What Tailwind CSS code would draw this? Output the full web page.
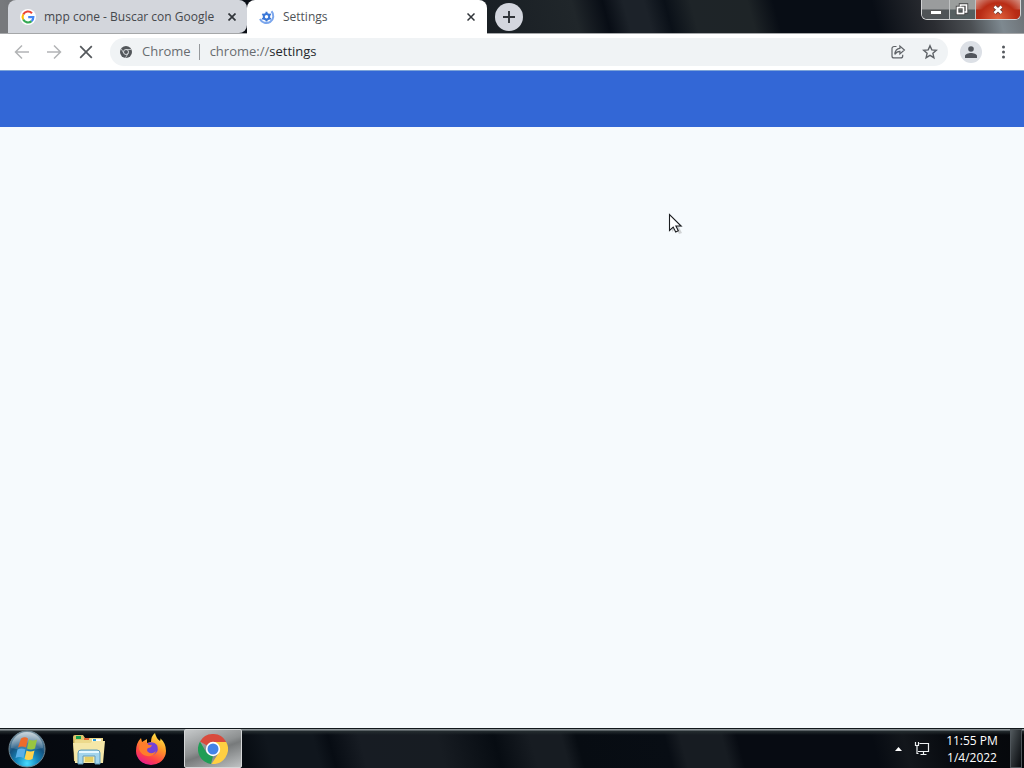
<!DOCTYPE html>
<html lang="en">
<head>
<meta charset="utf-8">
<title>Settings</title>
<script src="https://cdn.jsdelivr.net/npm/@tailwindcss/browser@4"></script>
</head>
<body class="flex h-screen flex-col overflow-hidden bg-[#f6fafd] font-['Open_Sans','Noto_Sans',sans-serif]">

<header class="flex h-[34px] shrink-0 items-start justify-between border-b border-[#a5a7a9] bg-[linear-gradient(75deg,#77797c_0,#77797c_10px,#090d14_240px,#1b2126_500px,#20262a_560px,#080d15_590px,#1c2229_610px,#1c2229_630px,#0a1018_650px,#1e2428_675px,#1e2427_730px,#080d15_755px,#080d15_850px,#2b2d32_905px,#4b4f53_940px,#7e8990_970px,#626366_1010px,#777_100%)]">
  <nav class="flex h-full items-start" aria-label="Tabs">
    <div class="ml-2 flex h-[33px] w-[239px] items-center rounded-t-lg rounded-br-lg bg-[#d3d6dc] pr-[7px] pl-3">
      <svg class="size-4 shrink-0" viewBox="0 0 16 16"><circle cx="8" cy="8" r="8" fill="#fff"/><g fill="none" stroke-width="2.1"><path d="M12 4.2A5.4 5.4 0 0 0 3.2 5.5" stroke="#ea4335"/><path d="M3.2 5.5a5.4 5.4 0 0 0 0 5" stroke="#fbbc05"/><path d="M3.2 10.5a5.4 5.4 0 0 0 8.4 1.6" stroke="#34a853"/><path d="M11.6 12.1A5.2 5.2 0 0 0 13.4 8.1H8.2" stroke="#4285f4"/></g></svg>
      <a href="#" class="ml-2 grow text-xs whitespace-nowrap text-[#45484c]">mpp cone - Buscar con Google</a>
      <button aria-label="Close tab" class="grid size-4 shrink-0 place-items-center"><svg class="size-2" viewBox="0 0 8 8"><path d="M.5.5l7 7m0-7l-7 7" stroke="#303439" stroke-width="1.7"/></svg></button>
    </div>
    <div class="flex h-[34px] w-60 items-center rounded-t-lg bg-white pr-2 pl-3">
      <svg class="size-4 shrink-0" viewBox="0 0 16 16"><g fill="none" stroke="#3b78d8"><circle cx="7.5" cy="7.7" r="2.7" stroke-width="2"/><path d="M7.5 2.8v2m0 5.8v2M3.3 5.2L5 6.2m5 3l1.8 1M3.3 10.2l1.7-1m5-3l1.8-1" stroke-width="2"/><path d="M12.5 2.3A7 7 0 1 1 1 10" stroke="#7ba6ec" stroke-width="2"/></g></svg>
      <a href="#" class="ml-2 grow text-xs text-[#505357]">Settings</a>
      <button aria-label="Close tab" class="grid size-4 shrink-0 place-items-center"><svg class="size-2" viewBox="0 0 8 8"><path d="M.5.5l7 7m0-7l-7 7" stroke="#303439" stroke-width="1.5"/></svg></button>
    </div>
    <button aria-label="New tab" class="mt-[3px] ml-2 grid size-7 place-items-center rounded-full bg-[#d3d6de]"><svg class="size-3" viewBox="0 0 12 12"><path d="M6 0v12M0 6h12" stroke="#303439" stroke-width="1.9"/></svg></button>
  </nav>
  <div class="mr-[3px] flex h-5 overflow-hidden rounded-b-md border border-t-0 border-[#d2d3d4]">
    <button aria-label="Minimize" class="grid w-7 place-items-center border-r border-[#c0c2c3] bg-linear-to-b from-[#9a9c9d] from-45% to-[#4f5356] to-55%"><svg class="h-[18px] w-5" viewBox="0 0 20 18"><rect x="4.5" y="9.5" width="11" height="4" fill="#fff" stroke="#555"/></svg></button>
    <button aria-label="Restore" class="grid w-[26px] place-items-center border-r border-[#c0c2c3] bg-linear-to-b from-[#9b9e9d] from-45% to-[#555f60] to-55%"><svg class="h-[18px] w-4" viewBox="0 0 16 18"><g fill="none" stroke="#444" stroke-width="3.4"><path d="M5.5 5.5V4h6v7h-2"/><rect x="2.5" y="6.5" width="6" height="6"/></g><g fill="none" stroke="#fff" stroke-width="1.7"><path d="M5.5 5.5V4h6v7h-2"/><rect x="2.5" y="6.5" width="6" height="6"/></g></svg></button>
    <button aria-label="Close" class="grid w-11 place-items-center bg-[radial-gradient(ellipse_at_bottom,#e06440_0,#b92c15_60%,transparent_100%),linear-gradient(#d49386_45%,#a72713_55%)]"><svg class="h-[18px] w-4" viewBox="0 0 16 18"><path d="M4.5 5.5l7 6.5m0-6.5l-7 6.5" stroke="#673a35" stroke-width="4.2"/><path d="M4.5 5.5l7 6.5m0-6.5l-7 6.5" stroke="#fff" stroke-width="2.5"/></svg></button>
  </div>
</header>

<div class="flex h-[37px] shrink-0 items-center border-b border-[#7da4d8] bg-white pr-2.5 pl-3.5">
  <div class="flex gap-4">
    <button aria-label="Back" class="size-4"><svg viewBox="0 0 16 16" fill="none" stroke="#b2b4b6" stroke-width="1.5"><path d="M15 8H1.5M8 1.5L1.5 8 8 14.5"/></svg></button>
    <button aria-label="Forward" class="size-4"><svg viewBox="0 0 16 16" fill="none" stroke="#b2b4b6" stroke-width="1.5"><path d="M1 8h13.5M8 1.5L14.5 8 8 14.5"/></svg></button>
    <button aria-label="Stop" class="size-4"><svg viewBox="0 0 16 16" fill="none" stroke="#54585c" stroke-width="1.7"><path d="M2.2 2.2l11.6 11.6m0-11.6L2.2 13.8"/></svg></button>
  </div>
  <div class="ml-4 flex h-7 grow items-center rounded-full bg-[#f0f3f5] pr-2.5 pl-2.5 text-[13px] text-[#686c70]">
    <svg class="size-3 shrink-0" viewBox="0 0 12 12"><circle cx="6" cy="6" r="6" fill="#53575b"/><circle cx="6" cy="6" r="2.5" fill="none" stroke="#d7dadd" stroke-width="1"/><path d="M6 3.5h5.3M3.8 7.2L1.2 2.8M8.2 7.2L5.5 11.8" stroke="#d7dadd" stroke-width=".8"/></svg>
    <span class="ml-2.5">Chrome</span>
    <span class="mr-2.5 ml-2 h-4 w-px bg-[#96999c]"></span>
    <div class="grow" role="textbox" aria-label="Address">chrome://<span class="text-[#26292d]">settings</span></div>
    <button aria-label="Share" class="size-4"><svg viewBox="0 0 16 16" fill="none" stroke="#5f6368" stroke-width="1.2"><path d="M6.5 2.5H4a2 2 0 0 0-2 2v7.4a2 2 0 0 0 2 2h6.7a2 2 0 0 0 2-2v-1.2M4.8 10.4c.3-3.7 2-5.8 5.1-6V2l4.5 4-4.5 4V7.4c-2.4 0-3.8 1-5.1 3z"/></svg></button>
    <button aria-label="Bookmark this page" class="ml-4 size-4"><svg viewBox="0 0 16 16" fill="none" stroke="#5f6368" stroke-width="1.4"><path d="M8 1.8l1.8 4.1 4.5.4-3.4 3 1 4.4L8 11.4l-3.9 2.3 1-4.4-3.4-3 4.5-.4z"/></svg></button>
  </div>
  <button aria-label="Profile" class="ml-3 grid size-[22px] place-items-center rounded-full bg-[#dce0e6]"><svg class="size-3" viewBox="0 0 12 12" fill="#51555c"><circle cx="6" cy="3" r="2.8"/><path d="M0 12v-2c0-2 3.5-3 6-3s6 1 6 3v2z"/></svg></button>
  <button aria-label="Menu" class="ml-3 h-4 w-5"><svg viewBox="0 0 20 16" fill="#55595e"><circle cx="9.5" cy="3" r="1.5"/><circle cx="9.5" cy="8" r="1.5"/><circle cx="9.5" cy="13" r="1.5"/></svg></button>
</div>

<div class="h-14 shrink-0 bg-[#3367d6]"></div>

<main class="relative grow bg-[#f6fafd]">
  <svg class="absolute top-[86px] left-[668px] h-6 w-5" viewBox="0 0 20 24"><path d="M4 5v14l4-4 3 6 3-1-3-6h4z" fill="#777" opacity=".3"/><path d="M1.5 1.5v16l3.7-3.4 2.5 5 2.6-1.3-2.4-4.8h5.2z" fill="#fff" stroke="#1b1d20" stroke-width="1.1"/></svg>
</main>

<footer class="flex h-10 shrink-0 items-stretch border-t border-[#11171b] bg-[linear-gradient(#8d9498_0,#8d9498_1px,#252d30_2px,transparent_6px),linear-gradient(75deg,#05080e_0,#070c12_240px,#10161d_265px,#10161d_310px,#070c13_325px,#171c23_355px,#171c22_430px,#070c12_485px,#171c22_520px,#171c22_550px,#070c12_565px,#080d14_650px,#171c22_665px,#171c22_705px,#070b12_720px,#070b12_850px,#12161b_880px,#080b10_920px,#05070a_100%)] pr-0.5 pl-2">
  <nav class="flex grow items-stretch" aria-label="Taskbar">
    <button aria-label="Start" class="grid w-[38px] place-items-center"><svg class="size-[38px]" viewBox="0 0 38 38">
      <defs><radialGradient id="orb" cx=".5" cy=".9" r=".85"><stop offset="0" stop-color="#48dcff"/><stop offset=".35" stop-color="#1688bd"/><stop offset=".65" stop-color="#15527f"/><stop offset="1" stop-color="#7894a4"/></radialGradient><linearGradient id="shine" x2="0" y2="1"><stop stop-color="#fff" stop-opacity=".6"/><stop offset="1" stop-color="#fff" stop-opacity=".1"/></linearGradient></defs>
      <circle cx="19" cy="19" r="18" fill="url(#orb)" stroke="#6f8793"/><path d="M3 18a16 16 0 0 1 32 0Q19 22 3 18z" fill="url(#shine)"/>
      <path d="M13 8.500q4-2.500 7 0l-2 9q-4-2-8 0z" fill="#ed6b2b"/><path d="M21 9.500q4 2 8 0l-2 9q-4 2-8 0z" fill="#98c640"/><path d="M9.500 19.500q4-2 8 0l-2 8.500q-4-2-8 0z" fill="#59afe8"/><path d="M18.500 20.500q4 2 8 0l-2 8.500q-4 2-8 0z" fill="#ffd34d"/></svg></button>
    <button aria-label="File Explorer" class="ml-3 grid w-[62px] place-items-center"><svg class="h-8 w-[34px]" viewBox="0 0 34 32">
      <path d="M1 4q0-2 2-2h8l2 3h16q2 0 2 2v21H2z" fill="#dfc56d"/><path d="M4 3h5v3H4z" fill="#19a151"/><path d="M12 5h6v3h-6z" fill="#e36638"/><path d="M3 7h12l3-2h13v24H3z" fill="#ecd98c"/><path d="M12 5h5v2h-5z" fill="#e36638"/><path d="M20 6h9v3h-9z" fill="#fff"/><path d="M21 6h3v2h-3z" fill="#2a9edc"/><path d="M1 10h17l3-2h12l-2 22H3z" fill="#f5e7a8"/><path d="M6 31V20q0-3 3-3h16q3 0 3 3v11h-5v-8H11v8z" fill="#a3d5ed" stroke="#629db9"/><path d="M13 24h8v5h-8z" fill="#e5cf64"/><path d="M7 19h20" stroke="#e5f8ff" stroke-width="2"/></svg></button>
    <button aria-label="Firefox" class="grid w-[62px] place-items-center"><svg class="h-8 w-8" viewBox="0 0 32 32">
      <defs><linearGradient id="fox" x1=".8" y1="0" x2=".3" y2="1"><stop stop-color="#fff04c"/><stop offset=".4" stop-color="#ff9827"/><stop offset=".75" stop-color="#ff4248"/><stop offset="1" stop-color="#e41991"/></linearGradient></defs>
      <path d="M20 0q1 5 5 8 1-2 0-3 6 5 6 13a15 14 0 0 1-30 0Q1 10 6 5l1 4 5-3 0 4 4-1Q16 3 20 0z" fill="url(#fox)"/><path d="M11 11q7-4 11 1 2 5-1 8-4 4-9 1-4-3-2-6l4-2z" fill="#7542d6"/><path d="M5 10q4-2 7 0 1 3 5 2-1 3-4 3-2 2 0 4 4 3 8-1-2 6-9 5-6-1-8-7z" fill="#ff7d2c"/></svg></button>
    <button aria-label="Google Chrome" class="ml-0.5 grid w-[58px] place-items-center rounded-xs border border-[#d5d7d8] bg-[linear-gradient(160deg,#c6c9ca,#8e9192_45%,#777a7b_55%,#bfc2c3)]"><svg class="size-[30px]" viewBox="0 0 30 30"><path d="M15 15L2 7.5A15 15 0 0 1 28 7.5L21.500 15z" fill="#d94b3d"/><path d="M2 7.5l6.5 11.3L15 22l-2 8A15 15 0 0 1 2 7.5z" fill="#209d55"/><path d="M15 8h13.2A15 15 0 0 1 13.5 30l7.8-12z" fill="#ffcf42"/><circle cx="15" cy="15" r="7.2" fill="#fff"/><circle cx="15" cy="15" r="5.5" fill="#4383e8"/></svg></button>
  </nav>
  <div class="flex items-center text-white">
    <button aria-label="Show hidden icons" class="grid size-4 place-items-center"><svg class="h-1 w-[7px]" viewBox="0 0 7 4"><path d="M0 4l3.5-4L7 4z" fill="#fff"/></svg></button>
    <button aria-label="Network" class="ml-2 size-4"><svg viewBox="0 0 16 16" fill="none" stroke="#edf0f2" stroke-width="1.2"><path d="M5.5 2.500h9v8H4M9.500 10.500v3M6.500 13.500h6M1.500 1v3.500h3V1M3 4.500v8h1.500"/></svg></button>
    <time class="mr-2 ml-3 w-[60px] text-center text-xs leading-[17px] whitespace-nowrap">11:55 PM<br>1/4/2022</time>
    <button aria-label="Show desktop" class="h-full w-3 border border-[#4f565b] bg-linear-to-br from-[#52595d] to-[#080b0e]"></button>
  </div>
</footer>
</body>
</html>
